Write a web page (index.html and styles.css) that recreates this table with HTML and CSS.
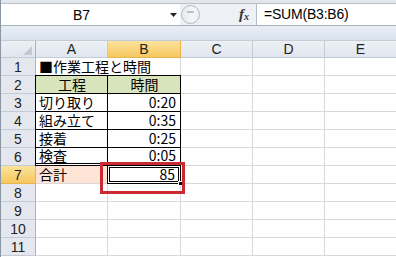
FILE: index.html
```html
<!DOCTYPE html>
<html lang="ja">
<head>
    <meta charset="UTF-8">
    <title>作業工程と時間</title>
    <link rel="stylesheet" href="styles.css">
</head>
<body>
<div class="app">
    <div class="top-strip"></div>

    <!-- name box + formula bar -->
    <div class="formula-bar">
        <div class="name-box">
            <span class="cell-ref">B7</span>
            <svg class="drop" width="7" height="4" viewBox="0 0 7 4"><path d="M0 0h7L3.5 4z" fill="#222"/></svg>
        </div>
        <div class="fx-area">
            <span class="grip"><span class="grip-dash"></span></span>
            <span class="fx">f<sub>x</sub></span>
        </div>
        <div class="formula">=SUM(B3:B6)</div>
    </div>
    <div class="band"></div>

    <div class="sheet">
        <div class="hd corner"><svg width="9" height="9" viewBox="0 0 9 9"><path d="M9 0v9H0z" fill="#c3c9d1"/></svg></div>
        <div class="hd col">A</div>
        <div class="hd col sel">B</div>
        <div class="hd col">C</div>
        <div class="hd col">D</div>
        <div class="hd col">E</div>

        <div class="hd row">1</div>
        <div class="c title">■作業工程と時間</div>
        <div class="c"></div><div class="c"></div><div class="c"></div>

        <div class="hd row">2</div>
        <div class="c t head bl">工程</div>
        <div class="c t head">時間</div>
        <div class="c"></div><div class="c"></div><div class="c"></div>

        <div class="hd row">3</div>
        <div class="c t bl">切り取り</div>
        <div class="c t num">0:20</div>
        <div class="c"></div><div class="c"></div><div class="c"></div>

        <div class="hd row">4</div>
        <div class="c t bl">組み立て</div>
        <div class="c t num">0:35</div>
        <div class="c"></div><div class="c"></div><div class="c"></div>

        <div class="hd row">5</div>
        <div class="c t bl">接着</div>
        <div class="c t num">0:25</div>
        <div class="c"></div><div class="c"></div><div class="c"></div>

        <div class="hd row">6</div>
        <div class="c t bl last">検査</div>
        <div class="c t num last">0:05</div>
        <div class="c"></div><div class="c"></div><div class="c"></div>

        <div class="hd row sel">7</div>
        <div class="c total">合計</div>
        <div class="c num active">85<span class="handle"></span></div>
        <div class="c"></div><div class="c"></div><div class="c"></div>

        <div class="hd row">8</div>
        <div class="c"></div><div class="c"></div><div class="c"></div><div class="c"></div><div class="c"></div>
        <div class="hd row">9</div>
        <div class="c"></div><div class="c"></div><div class="c"></div><div class="c"></div><div class="c"></div>
        <div class="hd row">10</div>
        <div class="c"></div><div class="c"></div><div class="c"></div><div class="c"></div><div class="c"></div>
        <div class="hd row">11</div>
        <div class="c"></div><div class="c"></div><div class="c"></div><div class="c"></div><div class="c"></div>

        <!-- red marker around the total -->
        <div class="mark"></div>
    </div>
</div>
</body>
</html>
```

FILE: styles.css
```css
body {
    margin: 0;
    background: #ffffff;
    overflow: hidden;
}

.app {
    width: 396px;
    height: 257px;
    overflow: hidden;
    border-left: 1px solid #8a96a3;
    box-sizing: border-box;
    font-family: "Liberation Sans", "Noto Sans CJK JP", sans-serif;
    color: #000;
}

.top-strip {
    height: 3px;
    background: #e3e7ec;
    border-bottom: 1px solid #b9c1ca;
}

/* formula bar */
.formula-bar {
    display: flex;
    height: 21px;
    border-bottom: 1px solid #a9b3be;
}

.name-box {
    width: 179px;
    background: #fff;
    display: flex;
    align-items: center;
}

.cell-ref {
    margin-left: 72px;
    font-size: 14px;
}

.drop {
    margin-left: 80px;
}

.fx-area {
    width: 76px;
    background: #eef1f5;
    display: flex;
    align-items: center;
    border-right: 1px solid #b5bdc6;
}

.grip {
    width: 19px;
    height: 19px;
    border-radius: 50%;
    border: 1px solid #b3bac3;
    box-sizing: border-box;
    background: linear-gradient(90deg, #e6e9ed, #f4f6f8 60%, #eef1f5);
    margin-left: 1px;
    display: flex;
    justify-content: center;
    align-items: center;
}

.grip-dash {
    width: 7px;
    height: 2px;
    border-radius: 1px;
    background: #b9bfc7;
    margin-top: -6px;
}

.fx {
    margin-left: 39px;
    font-family: "Liberation Serif", serif;
    font-style: italic;
    font-weight: bold;
    font-size: 15px;
    color: #333;
}

.fx sub {
    font-size: 10px;
    vertical-align: -1px;
}

.formula {
    flex: 1;
    background: #fff;
    font-size: 14px;
    line-height: 21px;
    padding-left: 7px;
    letter-spacing: -0.2px;
}

.band {
    height: 14px;
    background: linear-gradient(#e8eef6, #dae3ee);
    border-bottom: 1px solid #c4ccd6;
}

/* sheet grid */
.sheet {
    position: relative;
    display: grid;
    grid-template-columns: 35px 72px 73px 72px 72px 72px;
    grid-template-rows: 17px repeat(11, 18px);
    font-family: "Noto Sans CJK JP", sans-serif;
    font-size: 14px;
}

.hd {
    box-sizing: border-box;
    background: linear-gradient(#edf1f5, #e0e6ed);
    border-right: 1px solid #c3cbd4;
    border-bottom: 1px solid #c3cbd4;
    display: flex;
    justify-content: center;
    align-items: center;
    color: #222;
    font-family: "Liberation Sans", sans-serif;
    font-size: 14px;
}

.corner {
    justify-content: flex-end;
    align-items: flex-end;
    padding: 0 3px 2px 0;
    border-right-color: #a9b3be;
}

.row {
    background: #e4e8ee;
    border-right-color: #a9b3be;
}

.hd.sel {
    background: linear-gradient(#fbe29c, #f6c85e);
    border-color: #e9b44c;
}

.c {
    box-sizing: border-box;
    border-right: 1px solid #d8d8d8;
    border-bottom: 1px solid #d8d8d8;
    line-height: 17px;
    padding: 0 2px 0 3px;
    white-space: nowrap;
    display: flex;
    align-items: flex-end;
}

/* A1 text runs on across B1 */
.title {
    grid-column: span 2;
}

/* the bordered table A2:B6 */
.t {
    border-right-color: #000;
    border-bottom-color: #000;
}

.bl {
    border-left: 1px solid #000;
    margin-left: -1px;
}

.head {
    background: #d8e4bc;
    justify-content: center;
    border-top: 1px solid #000;
    margin-top: -1px;
}

.num {
    justify-content: flex-end;
    padding-right: 4px;
}

.last {
    border-bottom: 3px double #000;
    line-height: 15px;
}

.total {
    background: #fde4d4;
}

.active {
    position: relative;
    border: 1px solid #000;
    margin: -1px 0 0 -1px;
    box-shadow: inset 0 0 0 1px #fff, inset 0 0 0 2px #000;
    padding-right: 5px;
}

.handle {
    position: absolute;
    right: -3px;
    bottom: -3px;
    width: 5px;
    height: 5px;
    background: #000;
    border: 1px solid #fff;
    box-sizing: border-box;
}

.mark {
    position: absolute;
    left: 99px;
    top: 121px;
    width: 85px;
    height: 32px;
    border: 3px solid #cc2a33;
    box-sizing: border-box;
    pointer-events: none;
}
```
